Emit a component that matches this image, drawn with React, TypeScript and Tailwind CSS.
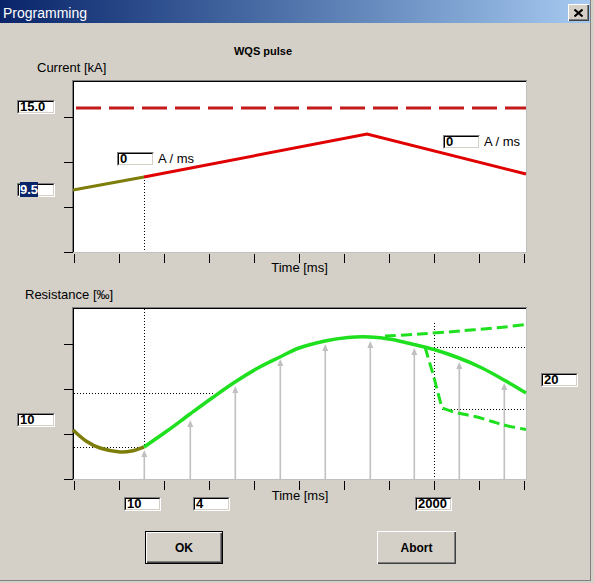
import React from "react";

type Pt = [number, number];

// catmull-rom -> cubic bezier, for the smooth resistance curves
function smooth(pts: Pt[]) {
  let d = `M${pts[0][0]},${pts[0][1]}`;
  for (let i = 0; i < pts.length - 1; i++) {
    const p0 = pts[i - 1] || pts[i];
    const p1 = pts[i];
    const p2 = pts[i + 1];
    const p3 = pts[i + 2] || p2;
    const c1x = p1[0] + (p2[0] - p0[0]) / 6;
    const c1y = p1[1] + (p2[1] - p0[1]) / 6;
    const c2x = p2[0] - (p3[0] - p1[0]) / 6;
    const c2y = p2[1] - (p3[1] - p1[1]) / 6;
    d += ` C${c1x},${c1y} ${c2x},${c2y} ${p2[0]},${p2[1]}`;
  }
  return d;
}

const X_TICKS = Array.from({ length: 11 }, (_, i) => 74.5 + i * 45);

const OLIVE: Pt[] = [
  [73, 430],
  [86, 441],
  [100, 448],
  [120, 452],
  [134, 450.5],
  [144, 447],
];

const GREEN: Pt[] = [
  [144, 447],
  [167, 431],
  [190, 414],
  [212, 398],
  [235, 382],
  [258, 368],
  [280, 357],
  [299, 348],
  [325, 341],
  [348, 337.5],
  [370, 337],
  [392, 339.5],
  [414, 344.5],
  [434, 349.5],
  [459, 358],
  [482, 368],
  [504, 380],
  [526, 393],
];

const UPPER: Pt[] = [
  [385, 336],
  [420, 334],
  [460, 331],
  [500, 327.5],
  [526, 324.5],
];

const LOWER_TAIL: Pt[] = [
  [442, 408],
  [458, 413],
  [475, 416.5],
  [492, 421.5],
  [506, 425.5],
  [526, 429.5],
];

const ARROWS: Pt[] = [
  [144, 450],
  [190, 420],
  [235, 386],
  [280, 359],
  [325, 344],
  [370, 341],
  [414, 348],
  [459, 362],
  [504, 383],
];

// plot frame + ticks, drawn in window coordinates
function Axes({ top, bottom }: { top: number; bottom: number }) {
  const yTicks = [0, 1, 2, 3].map((k) => Math.round(bottom - k * 45) + 0.5);
  return (
    <g shapeRendering="crispEdges">
      <rect x={73} y={top} width={453} height={bottom - top} fill="#fff" />
      <line x1={72} y1={top - 0.5} x2={527} y2={top - 0.5} stroke="#808080" />
      <line x1={73} y1={top + 0.5} x2={526} y2={top + 0.5} stroke="#000" />
      <line x1={72.5} y1={top - 1} x2={72.5} y2={bottom + 1} stroke="#808080" />
      <line x1={73.5} y1={top} x2={73.5} y2={bottom} stroke="#000" />
      <line x1={526.5} y1={top} x2={526.5} y2={bottom + 1} stroke="#c0c0c0" />
      <line x1={73} y1={bottom + 0.5} x2={527} y2={bottom + 0.5} stroke="#c0c0c0" />
      {yTicks.map((y) => (
        <line key={y} x1={64} y1={y} x2={73} y2={y} stroke="#000" />
      ))}
      {X_TICKS.map((x) => (
        <line key={x} x1={x} y1={bottom + 2} x2={x} y2={bottom + 11} stroke="#000" />
      ))}
    </g>
  );
}

function CurrentPlot() {
  return (
    <svg className="overflow-visible" width={594} height={187} viewBox="0 74 594 187">
      <Axes top={81} bottom={252} />
      <line x1={76} y1={108} x2={526} y2={108} stroke="#c41a1a" strokeWidth={3} strokeDasharray="25 8" />
      <line x1={144.5} y1={177} x2={144.5} y2={252} stroke="#000" strokeDasharray="1 2" shapeRendering="crispEdges" />
      <polyline points="73,190 144,177" fill="none" stroke="#7d7d0a" strokeWidth={3} />
      <polyline points="144,177 367,134 526,174" fill="none" stroke="#e00000" strokeWidth={3} />
    </svg>
  );
}

function ResistancePlot() {
  return (
    <svg className="overflow-visible" width={594} height={188} viewBox="0 301 594 188">
      <Axes top={308} bottom={479} />
      <g stroke="#000" strokeDasharray="1 2" shapeRendering="crispEdges">
        <line x1={144.5} y1={309} x2={144.5} y2={447} />
        <line x1={74} y1={393.5} x2={215} y2={393.5} />
        <line x1={74} y1={447.5} x2={144} y2={447.5} />
        <line x1={434.5} y1={323} x2={434.5} y2={479} />
        <line x1={434} y1={347.5} x2={526} y2={347.5} />
        <line x1={442} y1={409.5} x2={526} y2={409.5} />
      </g>
      {ARROWS.map(([x, y]) => (
        <g key={x} fill="#c0c0c0">
          <rect x={x - 0.5} y={y + 5} width={1.6} height={479 - y - 5} />
          <polygon points={`${x + 0.3},${y} ${x - 2.7},${y + 7} ${x + 3.3},${y + 7}`} />
        </g>
      ))}
      <path d={smooth(UPPER)} fill="none" stroke="#1ee01e" strokeWidth={3} strokeDasharray="11 5" />
      <path
        d={`M425,347 L433,374 L442,408 ${smooth(LOWER_TAIL).slice(10)}`}
        fill="none"
        stroke="#1ee01e"
        strokeWidth={3}
        strokeDasharray="11 5"
      />
      <path d={smooth(OLIVE)} fill="none" stroke="#7d7d0a" strokeWidth={3.5} />
      <path d={smooth(GREEN)} fill="none" stroke="#1ee01e" strokeWidth={3.5} />
    </svg>
  );
}

function Field({ className, value, selected }: { className: string; value: string; selected?: boolean }) {
  return (
    <div
      className={`absolute h-[14px] border border-t-[#808080] border-l-[#808080] border-r-white border-b-white bg-white ${className}`}
    >
      <div className="h-full border border-t-black border-l-black border-r-[#d4d0c8] border-b-[#d4d0c8] pl-px text-[13px] font-bold leading-[10px] text-black">
        {selected ? <span className="bg-[#0a246a] text-white">{value}</span> : value}
      </div>
    </div>
  );
}

const bevel = "shadow-[inset_1px_1px_0_#fff,inset_-1px_-1px_0_#404040,inset_-2px_-2px_0_#808080]";

export default function App() {
  return (
    <div className="h-[583px] w-[594px] bg-[#d4d0c8] font-['Liberation_Sans',Arial,sans-serif] text-black">
      <div className="h-[581px] w-[591px] border-b border-r border-[#808080]">
        <div className="flex h-[23px] items-start justify-between bg-linear-to-r from-[#0a246a] to-[#a6caf0] pl-[3px] pr-[1px]">
          <span className="pt-[3px] text-[14px] leading-[20px] text-white">Programming</span>
          <button className={`mt-[4px] flex h-[17px] w-[21px] items-center justify-center bg-[#d4d0c8] ${bevel}`}>
            <svg width="9" height="8" viewBox="0 0 9 8">
              <path d="M0.5 0.5 L8.5 7.5 M8.5 0.5 L0.5 7.5" stroke="#000" strokeWidth={2} />
            </svg>
          </button>
        </div>

        <h1 className="w-[526px] pt-[22px] text-center text-[11px] font-bold leading-[13px]">WQS pulse</h1>

        <section className="text-[13px] leading-[13px]">
          <p className="mt-[3px] pl-[37px]">Current [kA]</p>
          <div className="relative">
            <CurrentPlot />
            <Field className="left-[17px] top-[26px] w-[38px]" value="15.0" />
            <Field className="left-[17px] top-[109px] w-[38px]" value="9.5" selected />
            <div className="absolute left-[117px] top-[78px] flex items-start gap-[4px]">
              <Field className="static w-[37px]" value="0" />
              <span>A / ms</span>
            </div>
            <div className="absolute left-[443px] top-[61px] flex items-start gap-[4px]">
              <Field className="static w-[37px]" value="0" />
              <span>A / ms</span>
            </div>
          </div>
          <p className="w-[599px] text-center">Time [ms]</p>
        </section>

        <section className="text-[13px] leading-[13px]">
          <p className="mt-[14px] pl-[25px]">Resistance [‰]</p>
          <div className="relative">
            <ResistancePlot />
            <Field className="left-[17px] top-[112px] w-[38px]" value="10" />
            <Field className="left-[541px] top-[72px] w-[37px]" value="20" />
          </div>
          <div className="relative h-[27px]">
            <p className="w-[600px] text-center">Time [ms]</p>
            <Field className="left-[124px] top-[8px] w-[37px]" value="10" />
            <Field className="left-[193px] top-[8px] w-[37px]" value="4" />
            <Field className="left-[415px] top-[8px] w-[37px]" value="2000" />
          </div>
        </section>

        <div className="flex gap-[154px] pl-[145px] pt-[15px]">
          <button className={`h-[33px] w-[78px] border border-black bg-[#d4d0c8] text-[12px] font-bold ${bevel}`}>OK</button>
          <button className={`h-[33px] w-[79px] bg-[#d4d0c8] text-[12px] font-bold ${bevel}`}>Abort</button>
        </div>
      </div>
    </div>
  );
}
